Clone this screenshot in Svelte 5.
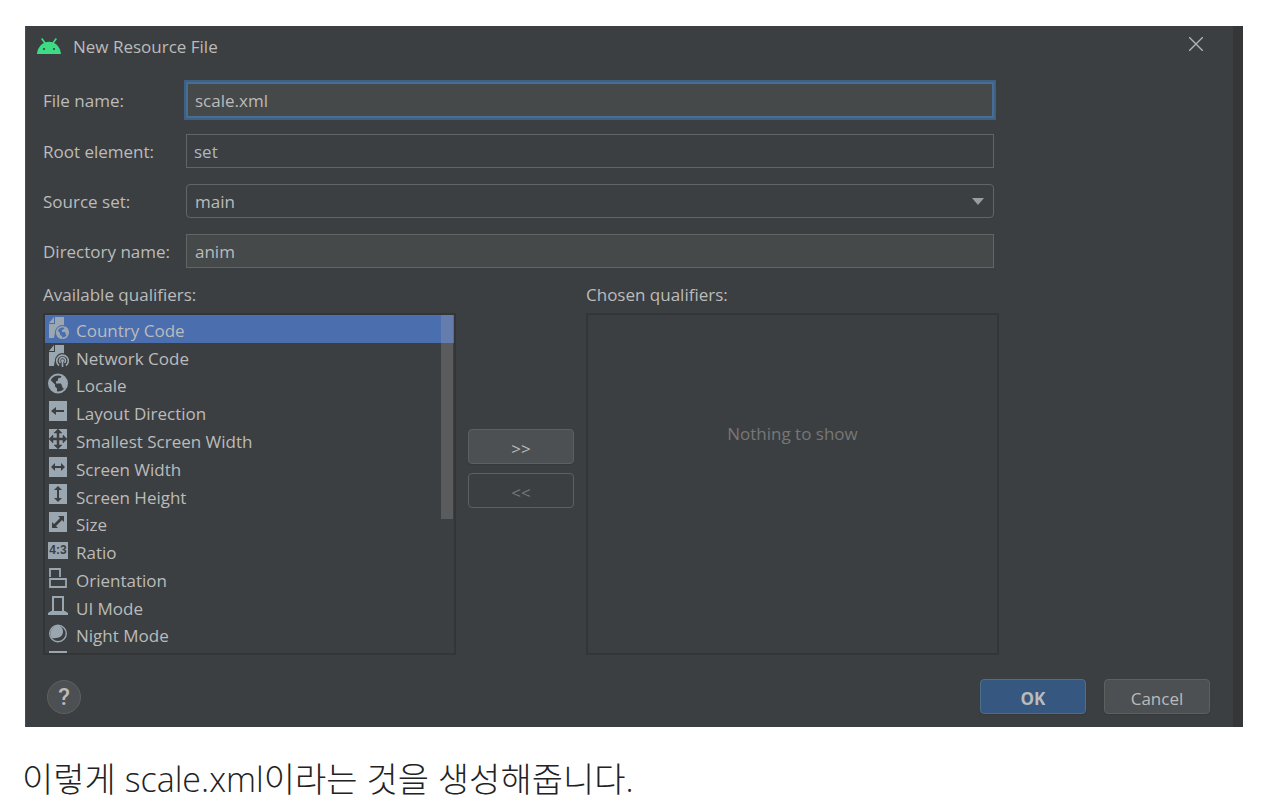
<script>
  const qualifiers = [
    { name: 'Country Code', icon: 'country' },
    { name: 'Network Code', icon: 'network' },
    { name: 'Locale', icon: 'locale' },
    { name: 'Layout Direction', icon: 'direction' },
    { name: 'Smallest Screen Width', icon: 'smallest' },
    { name: 'Screen Width', icon: 'width' },
    { name: 'Screen Height', icon: 'height' },
    { name: 'Size', icon: 'size' },
    { name: 'Ratio', icon: 'ratio' },
    { name: 'Orientation', icon: 'orientation' },
    { name: 'UI Mode', icon: 'uimode' },
    { name: 'Night Mode', icon: 'night' },
    { name: '', icon: 'touch' }
  ];
  let selected = $state(0);
  let fileName = $state('scale.xml');
  let rootElement = $state('set');
  let directory = $state('anim');
</script>

<main>
  <section class="dialog" aria-labelledby="dialog-title">
    <header>
      <svg class="logo" viewBox="0 0 24 16" width="24" height="16" aria-hidden="true">
        <path d="M0 16C.4 11 3 7 7 5L4 1 5.400 0 8.400 4.300Q12 3.100 15.600 4.300L18.600 0 20 1 17 5C21 7 23.600 11 24 16Z" fill="#3ddc84" />
        <circle cx="7" cy="11" r="1.100" fill="#3c3f41" /><circle cx="17" cy="11" r="1.100" fill="#3c3f41" />
      </svg>
      <h1 id="dialog-title">New Resource File</h1>
      <button class="close" aria-label="Close">
        <svg viewBox="0 0 14 14" width="14" height="14"><path d="M0 0L14 14M14 0L0 14" stroke="#afb1b3" stroke-width="1.400" /></svg>
      </button>
    </header>

    <form onsubmit={(e) => e.preventDefault()}>
      <div class="fields">
        <label for="file">File name:</label>
        <input id="file" class="focused" bind:value={fileName} />
        <label for="root">Root element:</label>
        <input id="root" class="code" bind:value={rootElement} />
        <label for="source">Source set:</label>
        <div class="combo">
          <select id="source"><option>main</option></select>
          <svg viewBox="0 0 12 7" width="12" height="7" aria-hidden="true"><path d="M0 0H12L6 7Z" fill="#9a9da0" /></svg>
        </div>
        <label for="dir">Directory name:</label>
        <input id="dir" bind:value={directory} />
      </div>

      <div class="qualifiers">
        <div class="column">
          <h2>Available qualifiers:</h2>
          <div class="list">
            <ul>
              {#each qualifiers as q, i}
                <li>
                  <button type="button" class="item" class:selected={selected === i} aria-label={q.name || 'More'} onclick={() => (selected = i)}>
                    <svg viewBox="0 0 22 24" width="22" height="24" aria-hidden="true" fill="#9aa7b0">
                      {#if q.icon === 'country' || q.icon === 'network'}
                        <path d="M8 1H17V10Q8 10 7 22H2V8H8Z M7 1V7H2Z" />
                      {/if}
                      {#if q.icon === 'country'}
                        <circle cx="15.500" cy="16.500" r="7.500" fill="#4b6eaf" />
                        <circle cx="15.500" cy="16.500" r="5.800" fill="none" stroke="#9aa7b0" stroke-width="1.500" />
                        <path d="M10 14L13 17V19L15 20V22.500Q9 22 9.500 16Z M14 11H18L17 13 15 14V16H18L19 19 20 20Q23 14 19 11Z" />
                      {:else if q.icon === 'network'}
                        <circle cx="15.500" cy="16.500" r="7.500" fill="#3c3f41" />
                        <path d="M12 21.500A5.800 5.800 0 1 1 19 21.500M13.500 18.800A3 3 0 1 1 17.500 18.800" fill="none" stroke="#9aa7b0" stroke-width="1.600" />
                        <circle cx="15.500" cy="16.500" r="1.500" /><path d="M14.700 17H16.300V23H14.700Z" />
                      {:else if q.icon === 'locale'}
                        <circle cx="11" cy="12.500" r="9" fill="none" stroke="#9aa7b0" stroke-width="2" />
                        <path d="M3 8.500L8 13.500V15.500L10 17.500V21.500Q2 20.500 2 12.500Z M8 3.500H15L14 6.500 11 7.500V9.500L9 10.500V12.500H14L16 17.500H18Q23 9.500 15 3.500Z" />
                      {:else if q.icon === 'direction'}
                        <path d="M2 2H20V22H2Z" /><path d="M4 12L9 8V11H17V13H9V16Z" fill="#3c3f41" />
                      {:else if q.icon === 'smallest'}
                        <path d="M2 2H20V22H2Z" />
                        <path d="M11 2L15 6H12V11H16V8L20 12 16 16V13H12V18H15L11 22 7 18H10V13H6V16L2 12 6 8V11H10V6H7Z" fill="#3c3f41" stroke="#3c3f41" stroke-width=".5" />
                      {:else if q.icon === 'width'}
                        <path d="M2 2H20V22H2Z" /><path d="M4 12L8 8V11H14V8L18 12 14 16V13H8V16Z" fill="#3c3f41" />
                      {:else if q.icon === 'height'}
                        <path d="M2 2H20V22H2Z" /><path d="M11 4L15 8H12V16H15L11 20 7 16H10V8H7Z" fill="#3c3f41" />
                      {:else if q.icon === 'size'}
                        <path d="M2 2H20V22H2Z" /><path d="M17 6V12L15 10 9 16 11 18H5V12L7 14 13 8 11 6Z" fill="#3c3f41" />
                      {:else if q.icon === 'ratio'}
                        <path d="M1 4H21V21H1Z" />
                        <text x="11" y="16" text-anchor="middle" font-family="Liberation Sans, sans-serif" font-size="12" font-weight="700" fill="#3c3f41">4:3</text>
                      {:else if q.icon === 'orientation'}
                        <path d="M3 11V3H13V11M3 13H19V21H3Z" fill="none" stroke="#9aa7b0" stroke-width="1.800" />
                      {:else if q.icon === 'uimode'}
                        <path d="M6 17V3H16V17" fill="none" stroke="#9aa7b0" stroke-width="2" />
                        <path d="M4 17H18L21 19V21H1V19Z" />
                      {:else if q.icon === 'night'}
                        <circle cx="11" cy="12.500" r="8.300" fill="none" stroke="#9aa7b0" stroke-width="1.400" />
                        <path d="M12 4.500A7 7 0 0 1 16 11.500Q15 18 5 17A8 8 0 0 1 12 4.500Z" />
                      {:else}
                        <path d="M2 2H20V22H2Z" />
                      {/if}
                    </svg>
                    <span>{q.name}</span>
                  </button>
                </li>
              {/each}
            </ul>
            <div class="thumb"></div>
          </div>
        </div>

        <div class="movers">
          <button type="button" class="push">&gt;&gt;</button>
          <button type="button" class="push" disabled>&lt;&lt;</button>
        </div>

        <div class="column">
          <h2>Chosen qualifiers:</h2>
          <div class="list empty"><p>Nothing to show</p></div>
        </div>
      </div>

      <footer>
        <button type="button" class="help" aria-label="Help">?</button>
        <button type="submit" class="push primary">OK</button>
        <button type="button" class="push">Cancel</button>
      </footer>
    </form>
  </section>
  <p class="caption">이렇게 scale.xml이라는 것을 생성해줍니다.</p>
</main>

<style>
  :global(body) { background: #fff; }
  main { padding: 26px 35px 0 25px; font-family: "Open Sans", "Noto Sans CJK KR", sans-serif; }
  * { box-sizing: border-box; }
  h1, h2, p, ul { margin: 0; padding: 0; font-size: 17px; font-weight: 400; line-height: 24px; }
  button, input, select { font: inherit; color: inherit; }
  .dialog {
    background: #3c3f41; color: #bbb; font-size: 17px; line-height: 24px;
    border-right: 10px solid #353637; border-left: 1px solid #4a4d50;
    padding: 8px 0 13px;
  }
  header { display: flex; align-items: center; gap: 12px; padding: 0 30px 0 11px; height: 24px; }
  .logo { flex: none; }
  h1 { flex: 1; padding-top: 1px; }
  .close { border: 0; padding: 0; background: none; width: 14px; height: 14px; line-height: 0; margin-bottom: 4px; }
  .close svg { display: block; }
  form { padding: 24px 23px 0 17px; }
  .fields { display: grid; grid-template-columns: 143px 1fr; gap: 16px 0; align-items: center; margin-right: 216px; }
  label { padding-top: 1px; }
  input, select {
    display: block; width: 100%; height: 34px; margin: 0; padding: 1px 8px 0;
    background: #45494a; border: 1px solid #646464; border-radius: 0; outline: 0;
  }
  .focused { height: 36px; border-color: #466d94; box-shadow: 0 0 0 2px #3d6185, inset 0 0 0 1px #466d94; }
  .code { background: #3c3f41; color: #a9b7c6; padding: 1px 7px 0; }
  .combo { display: grid; align-items: center; }
  .combo > * { grid-area: 1 / 1; }
  .combo svg { justify-self: end; margin-right: 10px; pointer-events: none; }
  select { padding-top: 2px; appearance: none; background: #3c3f41; border-radius: 4px; }
  .qualifiers { display: flex; gap: 12px; margin: 15px 211px 0 0; }
  .column { flex: 1; min-width: 0; }
  h2 { margin-bottom: 6px; }
  .list { position: relative; height: 342px; border: 2px solid #343536; overflow: hidden; }
  ul { display: grid; grid-template-rows: repeat(13, 1fr); height: 361px; list-style: none; }
  li { min-height: 0; }
  .item {
    display: flex; gap: 7px; align-items: center; width: 100%; height: 100%;
    padding: 0 2px; border: 0; background: none; text-align: left;
  }
  .item svg { flex: none; margin-bottom: 2px; }
  .item span { padding-top: 4px; }
  .item.selected { background: #4b6eaf; }
  .thumb { position: absolute; top: 0; right: 1px; width: 12px; height: 204px; background: rgba(166, 166, 166, 0.280); }
  .empty { display: flex; justify-content: center; padding-top: 107px; color: #777; }
  .movers { display: flex; flex-direction: column; gap: 9px; padding-top: 146px; }
  .push {
    width: 106px; height: 35px; padding: 4px 0 0; background: #4c5052; border: 1px solid #5e6060;
    border-radius: 4px; box-shadow: 0 1px 1px #36393a;
  }
  .push:disabled { background: none; color: #777; box-shadow: none; }
  .primary { background: #365880; border-color: #4c708c; font-weight: 700; margin-left: auto; }
  footer { display: flex; align-items: center; gap: 18px; margin-top: 24px; }
  .help {
    width: 34px; height: 34px; margin-left: 4px; padding: 0; border: 1px solid #5e6060; border-radius: 50%;
    background: #4c5052; font-family: Roboto, sans-serif; font-size: 24px; font-weight: 500; line-height: 32px;
  }
  .caption { margin: 28px 0 0 -3px; color: #222; font-size: 34px; font-weight: 300; line-height: 48px; }
</style>
